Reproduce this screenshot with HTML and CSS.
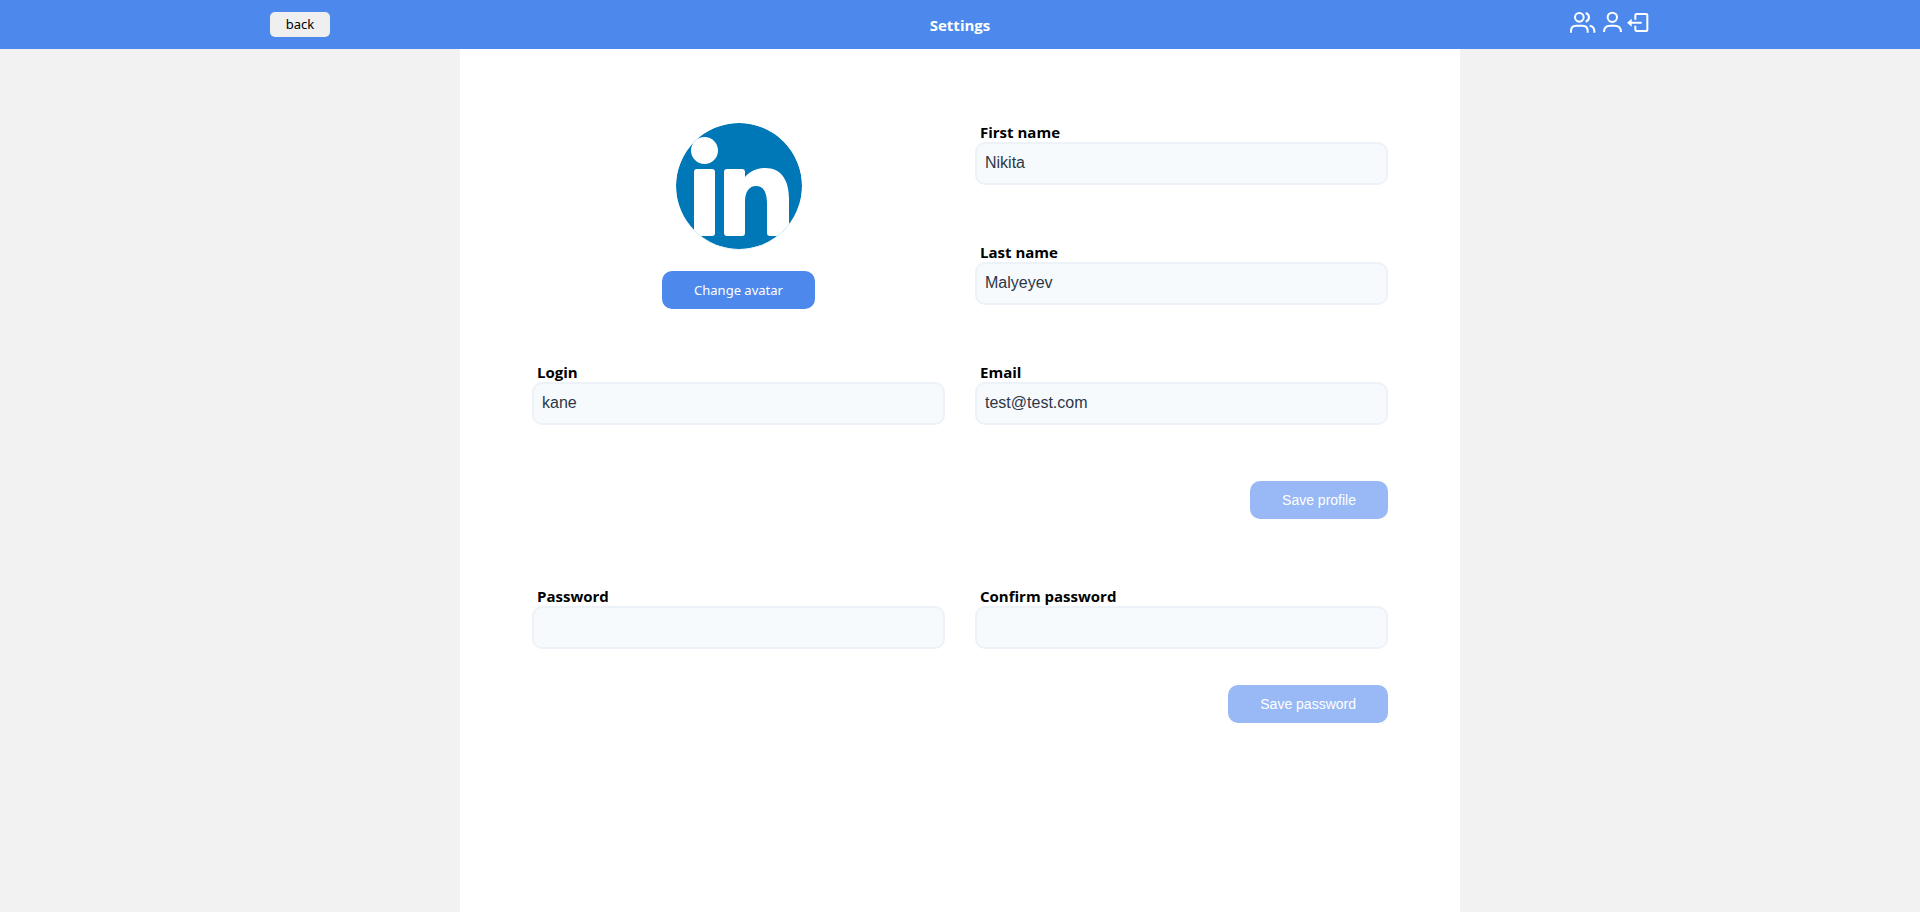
FILE: index.html
```html
<!DOCTYPE html>
<html lang="en">
<head>
<meta charset="utf-8">
<meta name="viewport" content="width=device-width, initial-scale=1">
<title>Settings</title>
<link rel="stylesheet" href="styles.css">
</head>
<body>
<header class="header">
  <div class="header-inner">
    <button class="back" type="button">back</button>
    <h1 class="title">Settings</h1>
    <nav class="nav">
      <a class="nav-link" href="#users" aria-label="Users">
        <svg class="icon" width="28" height="24" viewBox="0 0 84 72">
          <circle cx="31" cy="22" r="13"/>
          <path d="M6 68V63Q6 47 22 47H40Q56 47 56 63V68M50 9A13.500 13.500 0 0 1 50 35M62 47Q76 50 76 63V68"/>
        </svg>
      </a>
      <a class="nav-link" href="#profile" aria-label="Profile">
        <svg class="icon" width="28" height="24" viewBox="0 0 84 72">
          <circle cx="46" cy="22" r="14"/>
          <path d="M21 66Q21 47 40 47H52Q72 47 72 66"/>
        </svg>
      </a>
      <a class="nav-link" href="#logout" aria-label="Log out">
        <svg class="icon" width="25" height="24" viewBox="0 0 75 72">
          <path d="M31 29V16Q31 12 35 12H62Q67 12 67 16V59Q67 63 62 63H35Q31 63 31 59V47M16 38H50"/>
          <path class="icon-head" d="M6 38L20 26V50Z"/>
        </svg>
      </a>
    </nav>
  </div>
</header>
<main class="main">
  <form class="form">
    <div class="grid">
      <div class="profile-avatar">
        <svg class="avatar" viewBox="0 0 128 128" role="img" aria-label="Avatar">
          <defs><clipPath id="round"><circle cx="64" cy="64" r="63"/></clipPath></defs>
          <circle cx="64" cy="65" r="63" fill="#e8f1f8"/>
          <g clip-path="url(#round)">
            <circle cx="64" cy="64" r="63" fill="#0077b7"/>
            <g fill="#fff">
              <circle cx="29.500" cy="28.500" r="13.500"/>
              <rect x="19" y="47" width="21" height="67" rx="3"/>
              <path d="M52 47H67Q70 47 70 50V55C75 49 82 46 90 46C107 46 114 59 114 77V111Q114 114 111 114H95Q92 114 92 111V82C92 71 89 64 81 64C74 64 70 70 70 80V111Q70 114 67 114H52Q49 114 49 111V50Q49 47 52 47Z"/>
            </g>
          </g>
        </svg>
        <button class="button button-avatar" type="button">Change avatar</button>
      </div>
      <div class="field">
        <label class="label" for="first">First name</label>
        <input class="input" id="first" type="text" value="Nikita">
      </div>
      <div class="field">
        <label class="label" for="last">Last name</label>
        <input class="input" id="last" type="text" value="Malyeyev">
      </div>
      <div class="field">
        <label class="label" for="login">Login</label>
        <input class="input" id="login" type="text" value="kane">
      </div>
      <div class="field">
        <label class="label" for="email">Email</label>
        <input class="input" id="email" type="email" value="test@test.com">
      </div>
    </div>
    <div class="actions actions-profile">
      <button class="button" type="submit" disabled>Save profile</button>
    </div>
  </form>
  <form class="form">
    <div class="grid">
      <div class="field">
        <label class="label" for="password">Password</label>
        <input class="input" id="password" type="password">
      </div>
      <div class="field">
        <label class="label" for="confirm">Confirm password</label>
        <input class="input" id="confirm" type="password">
      </div>
    </div>
    <div class="actions">
      <button class="button" type="submit" disabled>Save password</button>
    </div>
  </form>
</main>
</body>
</html>
```
FILE: styles.css
```css
* { box-sizing: border-box; }

body {
  display: flex;
  flex-direction: column;
  min-height: 100vh;
  margin: 0;
  background: #f2f2f2;
  color: #000;
  font-family: "Open Sans", "Noto Sans", sans-serif;
}

.header { background: #4d89ed; }

.header-inner {
  display: grid;
  grid-template-columns: 1fr auto 1fr;
  align-items: center;
  max-width: 1380px;
  margin: 0 auto;
  padding: 12px 0;
}

.back {
  justify-self: start;
  width: 60px;
  height: 25px;
  padding: 0;
  border: 0;
  border-radius: 5px;
  background: #efefef;
  color: #000;
  font: 13px/25px "Noto Sans", sans-serif;
}

.title {
  margin: 0;
  padding-top: 2px;
  color: #fff;
  font-size: 15px;
  font-weight: 700;
  line-height: 23px;
}

.nav {
  display: flex;
  justify-self: end;
  align-self: start;
  margin-top: -2px;
}

.nav-link { display: flex; }

.icon {
  fill: none;
  stroke: #fff;
  stroke-width: 6;
}

.icon-head { fill: #fff; stroke: none; }

.main {
  display: flex;
  flex: 1;
  flex-direction: column;
  gap: 67px;
  width: 100%;
  max-width: 1000px;
  margin: 0 auto;
  padding: 73px 72px;
  background: #fff;
}

.grid {
  display: grid;
  grid-template-columns: 1fr 1fr;
  grid-auto-rows: 63px;
  gap: 57px 30px;
}

.profile-avatar {
  display: flex;
  grid-row: span 2;
  flex-direction: column;
  align-items: center;
  gap: 21px;
}

.avatar { flex: none; width: 128px; height: 128px; }

.field { display: flex; flex-direction: column; }

.label {
  padding-left: 5px;
  font-size: 15px;
  font-weight: 700;
  line-height: 20px;
}

.input {
  width: 100%;
  height: 43px;
  padding: 9px 8px 10px;
  border: 2px solid #ecf2f7;
  border-radius: 10px;
  background: #f6fafd;
  color: #2d3748;
  font: 16px/20px "Liberation Sans", sans-serif;
}

.button {
  flex: none;
  height: 38px;
  padding: 0 32px;
  border: 0;
  border-radius: 10px;
  background: #4d89ed;
  color: #fff;
  font: 14px/20px "Liberation Sans", sans-serif;
}

.button:disabled { background: #98b9f5; }

.button-avatar { font-family: "Noto Sans", sans-serif; font-size: 13px; }

.actions {
  display: flex;
  justify-content: flex-end;
  margin-top: 36px;
}

.actions-profile { margin-top: 56px; }
```
